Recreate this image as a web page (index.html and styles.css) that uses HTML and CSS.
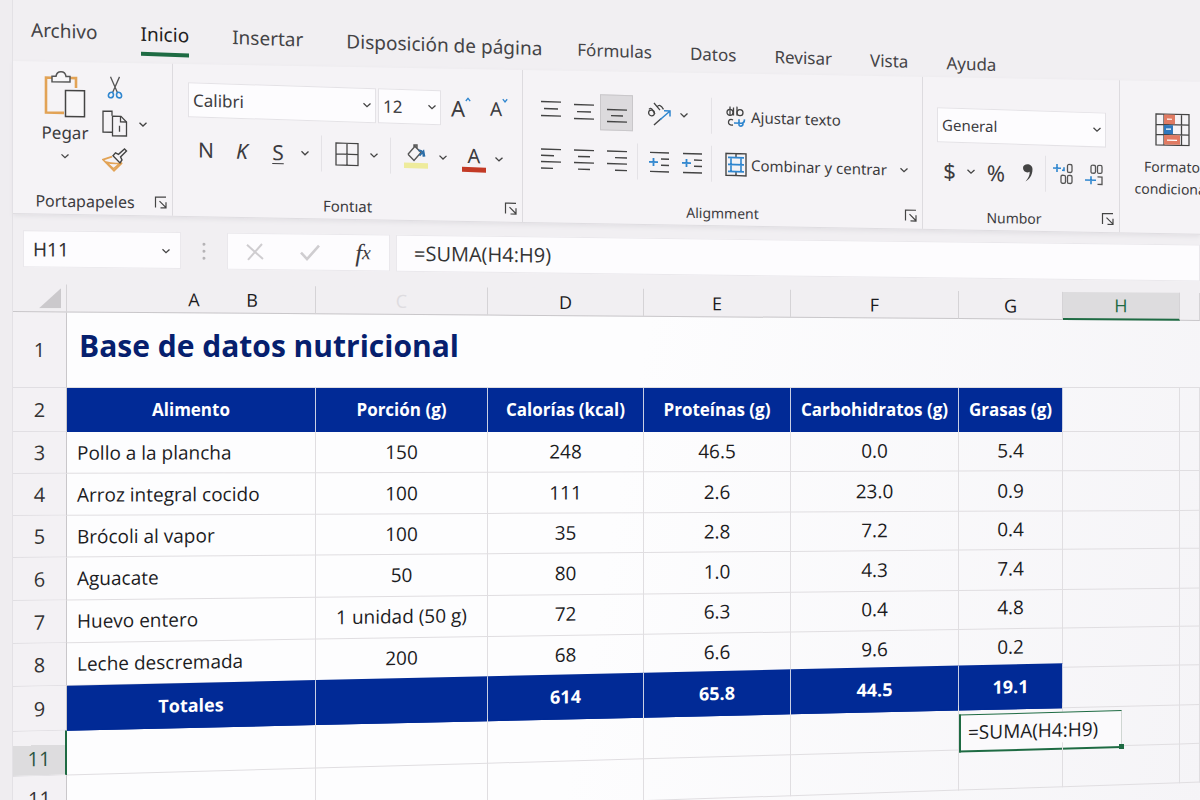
FILE: index.html
```
<!DOCTYPE html>
<html lang="es">
<head>
    <meta charset="UTF-8">
    <meta name="viewport" content="width=device-width, initial-scale=1.0">
    <title>Base de datos nutricional</title>
    <link rel="stylesheet" href="styles.css">
</head>
<body>
    <svg class="defs" aria-hidden="true">
        <symbol id="chev" viewBox="0 0 10 10"><path d="M1.5 3.5L5 6.8L8.5 3.5" fill="none" stroke="#444" stroke-width="1.3"/></symbol>
        <symbol id="launch" viewBox="0 0 14 14"><path d="M1.5 12V1.5H12M5.5 5.5L12 12M12 6.5V12.3H6.5" fill="none" stroke="#444" stroke-width="1.2"/></symbol>
    </svg>
    <div class="window">
        <nav class="tabs">
            <div class="near">
                <a href="#">Archivo</a>
                <a href="#" class="active">Inicio</a>
                <a href="#">Insertar</a>
                <a href="#">Disposición de página</a>
            </div>
            <div class="far">
                <a href="#">Fórmulas</a>
                <a href="#">Datos</a>
                <a href="#">Revisar</a>
                <a href="#">Vista</a>
                <a href="#">Ayuda</a>
            </div>
        </nav>

        <div class="ribbon">
            <section class="group clipboard">
                <div class="clip-body">
                    <button class="paste">
                        <svg width="42" height="48" viewBox="0 0 42 48" fill="none">
                            <path d="M8 7H2V42H20M26 7H32V17" stroke="#e2a356" stroke-width="2.6"/>
                            <path d="M8 11V5.500H12C12.500 2.500 14 1 17 1S21.500 2.500 22 5.500H26V11Z" stroke="#555" stroke-width="1.5" fill="#f7f6f8"/>
                            <path d="M21.500 19.500H40.500V45.500H21.500Z" stroke="#444" stroke-width="1.5" fill="#f7f6f8"/>
                        </svg>
                        <span>Pegar</span>
                        <svg class="chev"><use href="#chev"/></svg>
                    </button>
                    <div class="clip-tools">
                        <button aria-label="Cortar">
                            <svg width="16" height="24" viewBox="0 0 16 24" fill="none"><path d="M3.500 1L10.500 17M12.500 1L5.500 17" stroke="#555" stroke-width="1.300"/><path d="M5.500 16.500C1 16 0 22 3.500 22S7 18.500 5.500 16.500ZM10.500 16.500C15 16 16 22 12.500 22S9 18.500 10.500 16.500Z" stroke="#2f86cf" stroke-width="1.600"/></svg>
                        </button>
                        <button aria-label="Copiar">
                            <svg width="26" height="28" viewBox="0 0 26 28" fill="none" stroke="#444" stroke-width="1.300"><path d="M10 22.500H1V1.500H10V6"/><path d="M10.500 6.500H19L24.500 12V26H10.500Z"/><path d="M18.500 6.500V12H24.500M17.500 16V22"/></svg>
                            <svg class="chev"><use href="#chev"/></svg>
                        </button>
                        <button aria-label="Copiar formato">
                            <svg width="26" height="26" viewBox="0 0 26 26" fill="none"><path d="M10 9L1 12L12 23L20 15" stroke="#e2a356" stroke-width="1.800"/><path d="M4 14.500C9 16 13 16 18 15.500L11.500 21Z" stroke="#e2a356" stroke-width="1.600"/><path d="M11 8L18 15L20 12L18.500 9L24.500 3L22.500 1L16.500 6.500L13.500 5Z" stroke="#444" stroke-width="1.400"/></svg>
                        </button>
                    </div>
                </div>
                <div class="caption">Portapapeles<button aria-label="Más opciones de portapapeles"><svg class="launch"><use href="#launch"/></svg></button></div>
            </section>

            <section class="group font">
                <div class="row">
                    <select class="font-name" aria-label="Fuente"><option>Calibri</option></select>
                    <select class="font-size" aria-label="Tamaño"><option>12</option></select>
                    <button class="tool" aria-label="Aumentar tamaño"><span class="big-a">A</span><svg class="tick" width="6" height="5" viewBox="0 0 6 5"><path d="M.8 4L3 1.300L5.200 4" fill="none" stroke="#2f86cf" stroke-width="1.300"/></svg></button>
                    <button class="tool" aria-label="Reducir tamaño"><span class="small-a">A</span><svg class="tick" width="6" height="5" viewBox="0 0 6 5"><path d="M.8 1L3 3.700L5.200 1" fill="none" stroke="#2f86cf" stroke-width="1.300"/></svg></button>
                </div>
                <div class="row">
                    <button class="tool style">N</button>
                    <button class="tool style italic">K</button>
                    <button class="tool style under">S</button>
                    <button class="drop" aria-label="Tipo de subrayado"><svg class="chev"><use href="#chev"/></svg></button>
                    <i class="sep"></i>
                    <button class="tool" aria-label="Bordes"><svg width="24" height="24" viewBox="0 0 24 24" fill="none" stroke="#444" stroke-width="1.300"><path d="M1 1H23V23H1ZM12 1V23M1 12H23"/></svg></button>
                    <button class="drop" aria-label="Más bordes"><svg class="chev"><use href="#chev"/></svg></button>
                    <i class="sep"></i>
                    <button class="tool" aria-label="Color de relleno"><svg width="24" height="26" viewBox="0 0 24 26" fill="none"><path d="M4 11L11 3L17 9L10 17L4 11M10 4V1.500H13V5" stroke="#555" stroke-width="1.400"/><path d="M14.500 7C18.500 6.500 19.500 9 19.500 13M15.500 12L19.500 7.500L20.500 13" stroke="#2c6ea8" stroke-width="1.800"/><rect y="19.500" width="24" height="5.500" fill="#eeeb9c"/></svg></button>
                    <button class="drop" aria-label="Más rellenos"><svg class="chev"><use href="#chev"/></svg></button>
                    <button class="tool font-color" aria-label="Color de fuente">A</button>
                    <button class="drop" aria-label="Más colores"><svg class="chev"><use href="#chev"/></svg></button>
                </div>
                <div class="caption">Fontıat<button aria-label="Más opciones de fuente"><svg class="launch"><use href="#launch"/></svg></button></div>
            </section>

            <section class="group align">
                <div class="row">
                    <div class="cluster">
                        <button class="tool" aria-label="Alinear arriba"><svg class="lines" viewBox="0 0 20 22"><path d="M0 2H20M3 9H17M0 16H20"/></svg></button>
                        <button class="tool" aria-label="Centrar vertical"><svg class="lines" viewBox="0 0 20 22"><path d="M0 4H20M3 11H17M0 18H20"/></svg></button>
                        <button class="tool pressed" aria-label="Alinear abajo"><svg class="lines" viewBox="0 0 20 22"><path d="M0 8H20M4 14H16M0 20H20"/></svg></button>
                        <i class="sep clear"></i>
                        <button class="tool" aria-label="Orientación"><svg width="26" height="26" viewBox="0 0 26 26" fill="none"><g stroke="#444" stroke-width="1.300"><circle cx="5.500" cy="12" r="2.900"/><path d="M3 8.500C5 6 6 8 9 13M8 2L14 9"/><path d="M11 6C13 3 15 4 17.500 8"/></g><path d="M8 24L15 17.500" stroke="#444" stroke-width="1.400"/><path d="M14 18.500L23.500 10M18 9.500H24V15" stroke="#2f86cf" stroke-width="1.500"/></svg></button>
                        <button class="drop" aria-label="Más orientaciones"><svg class="chev"><use href="#chev"/></svg></button>
                    </div>
                    <button class="text-btn"><svg width="22" height="24" viewBox="0 0 22 24" fill="none" stroke="#444" stroke-width="1.300"><circle cx="5" cy="8" r="3"/><path d="M8.500 3V11M5 2V11M12 2V11"/><circle cx="15" cy="8" r="3"/><path d="M8 15.500C3 12.500 1 22 8 20.500"/><path d="M9 18.500H16C19 18.500 19.500 17 19.500 14.500M14 14.500V20C14 22 18 22 18 19" stroke="#2f86cf" stroke-width="1.600"/></svg>Ajustar texto</button>
                </div>
                <div class="row">
                    <div class="cluster">
                        <button class="tool" aria-label="Alinear a la izquierda"><svg class="lines" viewBox="0 0 20 22"><path d="M0 1.500H20M0 7.800H13M0 14H20M0 20.500H12"/></svg></button>
                        <button class="tool" aria-label="Centrar"><svg class="lines" viewBox="0 0 20 22"><path d="M0 1.500H20M4 7.800H16M0 14H20M4 20.500H16"/></svg></button>
                        <button class="tool" aria-label="Alinear a la derecha"><svg class="lines" viewBox="0 0 20 22"><path d="M0 1.500H20M8 7.800H20M0 14H20M8 20.500H20"/></svg></button>
                        <i class="sep"></i>
                        <button class="tool" aria-label="Disminuir sangría"><svg class="lines" viewBox="0 0 20 22"><path d="M1 1.500H20M12 7.800H20M12 14H20M1 20.500H20"/><path class="blue" d="M0 11H9M4.500 7V15"/></svg></button>
                        <button class="tool" aria-label="Aumentar sangría"><svg class="lines" viewBox="0 0 20 22"><path d="M1 1.500H20M12 7.800H20M12 14H20M1 20.500H20"/><path class="blue" d="M0 11H9M4.500 7V15"/></svg></button>
                    </div>
                    <button class="text-btn"><svg width="22" height="24" viewBox="0 0 22 24" fill="none"><path d="M1 1H21V23H1ZM11 1V5M11 19V23" stroke="#444" stroke-width="1.400"/><path d="M3 5H19M3 19H19M6 5V19M16 5V19M3 12H19" stroke="#2f86cf" stroke-width="1.600"/></svg>Combinar y centrar<svg class="chev"><use href="#chev"/></svg></button>
                </div>
                <div class="caption">Aligmment<button aria-label="Más opciones de alineación"><svg class="launch"><use href="#launch"/></svg></button></div>
            </section>

            <section class="group number">
                <div class="row">
                    <select class="format" aria-label="Formato de número"><option>General</option></select>
                </div>
                <div class="row">
                    <button class="tool sign">$</button>
                    <button class="drop" aria-label="Más monedas"><svg class="chev"><use href="#chev"/></svg></button>
                    <button class="tool sign">%</button>
                    <button class="tool" aria-label="Estilo millares"><svg width="12" height="20" viewBox="0 0 12 20"><path d="M1 5C1 0 10.500-.5 10.500 6C10.500 13 6.500 16.500 3.500 18.500C7 14 8 11 7.500 8.500C5 10.500 1 8.500 1 5Z" fill="#444"/></svg></button>
                    <i class="sep"></i>
                    <button class="tool" aria-label="Aumentar decimales"><svg width="20" height="22" viewBox="0 0 20 22" fill="none"><path d="M0 5H8M4 1V9M11 4V7H9" stroke="#2f86cf" stroke-width="1.600"/><g stroke="#555" stroke-width="1.300"><rect x="14.500" y="1" width="4.500" height="8" rx="1.500"/><rect x="8" y="12" width="4.500" height="8" rx="1.500"/><rect x="14.500" y="12" width="4.500" height="8" rx="1.500"/></g></svg></button>
                    <button class="tool" aria-label="Disminuir decimales"><svg width="20" height="22" viewBox="0 0 20 22" fill="none"><g stroke="#555" stroke-width="1.300"><rect x="6" y="1" width="4.500" height="8" rx="1.500"/><rect x="12.500" y="1" width="4.500" height="8" rx="1.500"/><path d="M12.500 12.500H17V20H12.500"/></g><path d="M0 16H11M6 12V20" stroke="#2f86cf" stroke-width="1.600"/></svg></button>
                </div>
                <div class="caption">Numbor<button aria-label="Más opciones de número"><svg class="launch"><use href="#launch"/></svg></button></div>
            </section>

            <section class="group styles">
                <button class="conditional">
                    <svg width="35" height="33" viewBox="0 0 35 33" fill="none"><path d="M1 1H34V32H1ZM1 11.500H34M1 21.500H34M9 1V32M26.500 1V32" stroke="#444" stroke-width="1.300"/><path d="M9 1.500H20V11H9ZM9 22H25V31.500H9Z" fill="#e07a62"/><path d="M9 12H18V21H9Z" fill="#2f78bd"/><path d="M12 6H17M11 16H16M12 27H22" stroke="#fff" stroke-width="1.200"/></svg>
                    <span>Formato condicional</span>
                </button>
            </section>
        </div>

        <div class="formula-bar">
            <select class="name-box" aria-label="Cuadro de nombres"><option>H11</option></select>
            <svg class="dots" width="4" height="18" viewBox="0 0 4 18" fill="#b5b3b6"><circle cx="2" cy="2" r="1.500"/><circle cx="2" cy="9" r="1.500"/><circle cx="2" cy="16" r="1.500"/></svg>
            <div class="actions">
                <button aria-label="Cancelar"><svg width="18" height="18" viewBox="0 0 18 18" fill="none" stroke="#cfcdd0" stroke-width="2"><path d="M1 2L17 16M16 1L2 17"/></svg></button>
                <button aria-label="Introducir"><svg width="20" height="18" viewBox="0 0 20 18" fill="none" stroke="#cfcdd0" stroke-width="2.600"><path d="M1 9L7 15.500L19 2"/></svg></button>
                <button class="fx" aria-label="Insertar función">f<small>x</small></button>
            </div>
            <input type="text" value="=SUMA(H4:H9)" aria-label="Barra de fórmulas">
        </div>

        <main class="sheet">
            <table>
                <colgroup>
                    <col class="c-num"><col class="c-a"><col class="c-c"><col class="c-d"><col class="c-e"><col class="c-f"><col class="c-g"><col class="c-h"><col>
                </colgroup>
                <thead>
                    <tr>
                        <th class="corner"><svg width="22" height="20" viewBox="0 0 22 20"><path d="M22 0V20H0Z" fill="#cbc9cc"/></svg></th>
                        <th class="ab"><span>A</span><span>B</span></th>
                        <th class="faded">C</th>
                        <th>D</th>
                        <th>E</th>
                        <th>F</th>
                        <th>G</th>
                        <th class="current">H</th>
                        <th></th>
                    </tr>
                </thead>
                <tbody>
                    <tr class="title">
                        <th>1</th>
                        <td colspan="8"><h1>Base de datos nutricional</h1></td>
                    </tr>
                    <tr class="band heads">
                        <th>2</th><td>Alimento</td><td>Porción (g)</td><td>Calorías (kcal)</td><td>Proteínas (g)</td><td>Carbohidratos (g)</td><td>Grasas (g)</td><td></td><td></td>
                    </tr>
                    <tr class="r3">
                        <th>3</th><td>Pollo a la plancha</td><td>150</td><td>248</td><td>46.5</td><td>0.0</td><td>5.4</td><td></td><td></td>
                    </tr>
                    <tr class="r4">
                        <th>4</th><td>Arroz integral cocido</td><td>100</td><td>111</td><td>2.6</td><td>23.0</td><td>0.9</td><td></td><td></td>
                    </tr>
                    <tr class="r5">
                        <th>5</th><td>Brócoli al vapor</td><td>100</td><td>35</td><td>2.8</td><td>7.2</td><td>0.4</td><td></td><td></td>
                    </tr>
                    <tr class="r6">
                        <th>6</th><td>Aguacate</td><td>50</td><td>80</td><td>1.0</td><td>4.3</td><td>7.4</td><td></td><td></td>
                    </tr>
                    <tr class="r7">
                        <th>7</th><td>Huevo entero</td><td>1 unidad (50 g)</td><td>72</td><td>6.3</td><td>0.4</td><td>4.8</td><td></td><td></td>
                    </tr>
                    <tr class="r8">
                        <th>8</th><td>Leche descremada</td><td>200</td><td>68</td><td>6.6</td><td>9.6</td><td>0.2</td><td></td><td></td>
                    </tr>
                    <tr class="band totals">
                        <th>9</th><td>Totales</td><td></td><td>614</td><td>65.8</td><td>44.5</td><td>19.1</td><td></td><td></td>
                    </tr>
                    <tr class="r11">
                        <th class="current">11</th><td></td><td></td><td></td><td></td><td></td><td class="anchor"><div class="editing">=SUMA(H4:H9)</div></td><td></td><td></td>
                    </tr>
                    <tr class="r12">
                        <th>11</th><td></td><td></td><td></td><td></td><td></td><td></td><td></td><td></td>
                    </tr>
                </tbody>
            </table>
        </main>
    </div>
</body>
</html>
```
FILE: styles.css
```
* {
    margin: 0;
    padding: 0;
    box-sizing: border-box;
}
body {
    font-family: "Noto Sans", sans-serif;
    background-color: #efedf0;
    color: #3c3b3e;
    height: 100vh;
    overflow: hidden;
}
button {
    border: none;
    background: none;
    font: inherit;
    color: inherit;
    display: flex;
    align-items: center;
    justify-content: center;
}
select {
    appearance: none;
    border: 1px solid #e4e2e6;
    background: #fdfcfe url("data:image/svg+xml,%3Csvg xmlns='http://www.w3.org/2000/svg' viewBox='0 0 10 10'%3E%3Cpath d='M1.5 3.5L5 6.8L8.500 3.5' fill='none' stroke='%23444' stroke-width='1.3'/%3E%3C/svg%3E") no-repeat right 3px center / 10px;
    font: inherit;
    color: inherit;
}
.defs {
    display: none;
}
.chev {
    width: 10px;
    height: 10px;
    flex: none;
}
.launch {
    width: 14px;
    height: 14px;
}
.window {
    margin-left: 12px;
    border-left: 1px solid #e3e1e5;
    min-height: 100vh;
    background-color: #f1eff2;
}

/* every band tilts a bit less than the one above it */
.tabs, .ribbon, .formula-bar, .row, tr {
    transform-origin: left center;
}
.tabs {
    display: flex;
    align-items: center;
    gap: 35px;
    height: 61px;
    padding-left: 18px;
    transform: skewY(2.1deg);
    white-space: nowrap;
}
.near, .far {
    display: flex;
    gap: 43px;
    font-size: 19px;
}
.far {
    gap: 38px;
    font-size: 17px;
}
.tabs a {
    color: #444346;
    line-height: 36px;
    text-decoration: none;
    border-bottom: 4px solid transparent;
}
.tabs a.active {
    color: #222;
    border-color: #1e6b43;
}

.ribbon {
    display: flex;
    height: 153px;
    background-color: #f5f3f6;
    border-bottom: 1px solid #dfdde1;
    box-shadow: 0 2px 4px #e2e0e4;
    transform: skewY(1deg);
}
.group {
    display: flex;
    flex-direction: column;
    flex: none;
    border-right: 1px solid #dddbdf;
}
.row {
    display: flex;
    align-items: center;
    height: 36px;
    transform: skewY(0.8deg);
}
.caption {
    position: relative;
    display: flex;
    align-items: center;
    justify-content: center;
    height: 26px;
    margin-top: auto;
    font-size: 15px;
}
.caption button {
    position: absolute;
    right: 4px;
    top: 6px;
}
.tool {
    width: 36px;
    height: 36px;
}
.drop {
    width: 18px;
    height: 36px;
}
.sep {
    width: 1px;
    height: 36px;
    margin: 0 7px;
    background-color: #e4e2e6;
}
.sep.clear {
    background: none;
}

.clipboard {
    width: 160px;
}
.clipboard .caption {
    padding-right: 15px;
    font-size: 16px;
}
.clip-body {
    display: flex;
    align-items: flex-start;
    padding-top: 9px;
    gap: 12px;
    padding-left: 27px;
}
.paste {
    flex-direction: column;
    width: 50px;
    font-size: 17px;
    line-height: 28px;
}
.paste .chev {
    margin-top: 4px;
}
.clip-tools {
    display: flex;
    flex-direction: column;
    align-items: flex-start;
    gap: 10px;
    padding-top: 4px;
}
.clip-tools button {
    gap: 10px;
    min-width: 26px;
}

.font {
    width: 350px;
    padding-top: 17px;
    gap: 14px;
}
.font .row {
    padding-left: 15px;
}
.font .row:first-child {
    gap: 2px;
}
.font-name, .font-size, .format {
    height: 35px;
    padding-left: 4px;
    font-size: 17px;
}
.font-name {
    width: 188px;
}
.font-size {
    width: 63px;
}
.big-a {
    font-size: 22px;
}
.small-a {
    font-size: 19px;
}
.tick {
    align-self: flex-start;
    margin-top: 7px;
}
.style {
    font-size: 21px;
}
.italic {
    font-style: italic;
}
.under {
    text-decoration: underline;
    text-decoration-thickness: 1px;
    text-underline-offset: 3px;
}
.font-color {
    width: 24px;
    height: 27px;
    margin: 0 4px 0 10px;
    border-bottom: 5px solid #c33a26;
    font-size: 20px;
    line-height: 20px;
}

.align {
    width: 400px;
    padding-top: 22px;
    gap: 12px;
}
.cluster {
    display: flex;
    width: 188px;
    padding-left: 11px;
}
.align .tool {
    width: 33px;
}
.align .sep {
    margin: 0 4px;
}
.lines {
    width: 20px;
    height: 22px;
    fill: none;
    stroke: #444;
    stroke-width: 1.4;
}
.lines .blue {
    stroke: #2f86cf;
    stroke-width: 1.8;
}
.pressed {
    background-color: #dcdadd;
    border: 1px solid #c9c7ca;
}
.text-btn {
    height: 36px;
    padding-left: 13px;
    gap: 4px;
    border-left: 1px solid #e4e2e6;
    font-size: 15px;
    white-space: nowrap;
}
.text-btn .chev {
    margin-left: 8px;
}

.number {
    width: 197px;
    padding-top: 29px;
    gap: 10px;
}
.number .row {
    padding-left: 14px;
}
.number .tool {
    width: 32px;
}
.number .tool:first-child {
    width: 25px;
}
.number .sep {
    margin: 0 1px;
}
.format {
    width: 169px;
    font-size: 15px;
}
.sign {
    font-size: 22px;
}
.align .caption, .number .caption {
    font-size: 14px;
}
.number .caption {
    padding-right: 14px;
}

.styles {
    border: none;
    padding: 32px 0 0 4px;
}
.conditional {
    flex-direction: column;
    width: 96px;
    font-size: 14px;
    line-height: 22px;
    gap: 10px;
}

.formula-bar {
    display: flex;
    height: 37px;
    margin-top: 16px;
    padding-left: 10px;
    transform: skewY(0.7deg);
}
.name-box {
    width: 158px;
    padding-left: 9px;
    background-position: right 9px center;
    border-color: #eae8ec;
    font-size: 19px;
    color: #333;
}
.dots {
    margin: 10px 21px;
}
.actions {
    display: flex;
    align-items: center;
    justify-content: space-between;
    width: 163px;
    padding: 0 18px;
    background-color: #fdfcfe;
    border: 1px solid #eae8ec;
}
.fx {
    font: italic 25px "Liberation Serif", serif;
}
.fx small {
    font-size: 20px;
}
.formula-bar input {
    flex: 1;
    min-width: 0;
    margin-left: 6px;
    padding-left: 17px;
    border: 1px solid #eae8ec;
    background-color: #fdfcfe;
    font: 20px "Open Sans", sans-serif;
    color: #333;
}

.sheet {
    margin-top: 17px;
    background: linear-gradient(#f1eff2 20px, transparent 20px), linear-gradient(100deg, #fdfdfe 50%, #f5f4f7);
}
table {
    width: 100%;
    table-layout: fixed;
    border-collapse: separate;
    border-spacing: 0;
    font-family: "Open Sans", sans-serif;
    color: #1c1c1e;
}
.c-num {
    width: 54px;
}
.c-a {
    width: 249px;
}
.c-c {
    width: 172px;
}
.c-d {
    width: 156px;
}
.c-e {
    width: 147px;
}
.c-f {
    width: 168px;
}
.c-g {
    width: 104px;
}
.c-h {
    width: 117px;
}
thead tr {
    height: 28px;
    background-color: #f1eff2;
    transform: skewY(0.43deg);
}
thead th {
    border-right: 1px solid #d5d3d6;
    border-bottom: 1px solid #c9c7ca;
    font-size: 18px;
    font-weight: normal;
    line-height: 22px;
}
thead .corner {
    text-align: right;
    padding-right: 5px;
}
thead .corner svg {
    display: block;
    margin-left: auto;
}
thead .ab {
    padding-left: 64px;
}
.ab span {
    display: inline-block;
    width: 58px;
}
thead .faded {
    color: #dedce0;
}
thead .current {
    background-color: #dddcde;
    border-bottom: 2px solid #1e6b43;
    color: #1e6b43;
}
tbody th {
    background-color: #f3f1f4;
    border-right: 1px solid #c9c7ca;
    border-bottom: 1px solid #e0dee2;
    font-size: 20px;
    font-weight: normal;
    color: #333;
}
tbody td {
    height: 42px;
    border-right: 1px solid #e0dee1;
    border-bottom: 1px solid #e0dee1;
    font-size: 19px;
    text-align: center;
    white-space: nowrap;
}
tbody td:nth-child(2) {
    text-align: left;
    padding-left: 10px;
}
.title td {
    height: 76px;
    padding-bottom: 8px;
    border-right: none;
}
.title td:nth-child(2) {
    padding-left: 12px;
}
h1 {
    font-size: 30px;
    color: #06206e;
}
.band td {
    height: 44px;
    font-weight: bold;
    font-size: 18px;
    color: #fff;
}
.heads td {
    font-size: 17px;
}
.band td:nth-child(2) {
    padding-left: 0;
    text-align: center;
}
.band td:nth-child(-n+7) {
    background-color: #012a96;
    border-color: #012a96;
    border-right-color: #c9cfe4;
}
.r3 {
    transform: skewY(-0.15deg);
}
.r4 {
    transform: skewY(-0.25deg);
}
.r5 {
    transform: skewY(-0.45deg);
}
.r6 {
    transform: skewY(-0.6deg);
}
.r7 {
    transform: skewY(-0.85deg);
}
.r8 {
    transform: skewY(-1.05deg);
}
.r6 td, .r7 td, .r8 td {
    height: 43px;
}
.totals {
    transform: skewY(-1.3deg);
}
.r11 {
    transform: skewY(-1.6deg);
}
.r12 {
    transform: skewY(-1.9deg);
}
.totals td, .r11 td, .r12 td {
    height: 45px;
}
tbody .current {
    background: linear-gradient(#f3f1f4 14px, #dddcde 14px);
    border-right: 2px solid #1e6b43;
    padding-top: 10px;
    color: #2c5542;
}
.anchor {
    position: relative;
}
.editing {
    position: absolute;
    left: 0;
    top: 9px;
    z-index: 1;
    width: 163px;
    height: 38px;
    padding-left: 7px;
    border: 2px solid #1e6b43;
    border-top-width: 1px;
    border-right: 1px solid #cfd6d2;
    background-color: #fbfafc;
    line-height: 34px;
    text-align: left;
}
.editing::after {
    content: "";
    position: absolute;
    right: -3px;
    bottom: -3px;
    width: 5px;
    height: 5px;
    background-color: #1e6b43;
}
```
